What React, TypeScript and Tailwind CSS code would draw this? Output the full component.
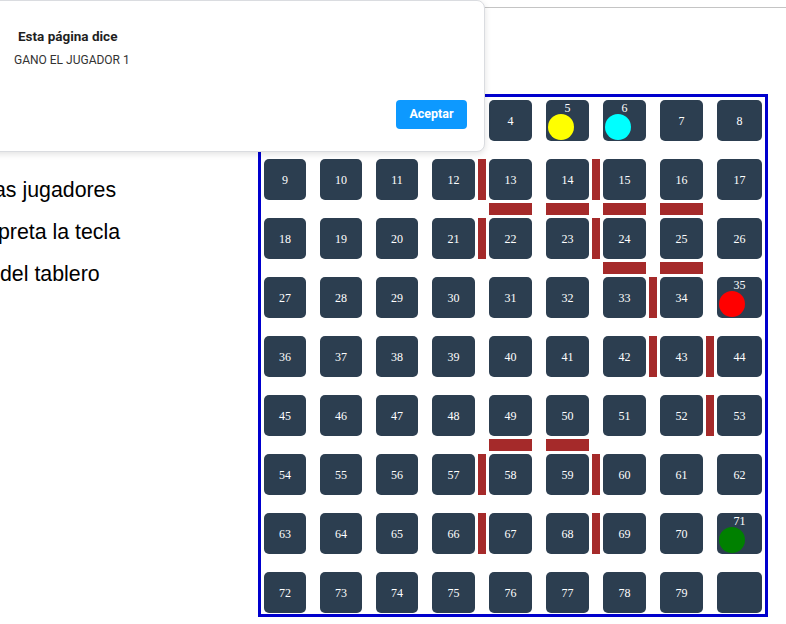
import React from 'react';

const verticalWalls = new Set([12, 14, 21, 23, 33, 42, 43, 52, 57, 59, 66, 68]);
const horizontalWalls = new Set([13, 14, 15, 16, 24, 25, 49, 50]);
const tokens: Record<number, string> = {
  5: 'bg-[#ffff00]',
  6: 'bg-[#00ffff]',
  35: 'bg-[#ff0000]',
  71: 'bg-[#008000]',
};

function Cell({ n }: { n: number }) {
  const token = tokens[n];
  const label = n === 80 ? '' : String(n);
  return (
    <div className="rounded-[5px] bg-[#2c3e50] text-white flex flex-col items-center justify-center font-['Liberation_Serif',serif] text-[12px]">
      {token ? (
        <>
          <span className="leading-[12px]">{label}</span>
          <div className={`w-[26px] h-[26px] rounded-full self-start ml-[2px] ${token}`} />
        </>
      ) : (
        <span className="leading-[14px]">{label}</span>
      )}
    </div>
  );
}

function Board() {
  const items: React.ReactNode[] = [];
  for (let r = 0; r < 17; r++) {
    for (let c = 0; c < 17; c++) {
      const key = `${r}-${c}`;
      if (r % 2 === 0 && c % 2 === 0) {
        items.push(<Cell key={key} n={(r / 2) * 9 + c / 2} />);
      } else if (r % 2 === 0) {
        const left = (r / 2) * 9 + (c - 1) / 2;
        items.push(
          verticalWalls.has(left) ? (
            <div key={key} className="mx-auto w-[8px] h-full bg-[#a52a2a]" />
          ) : (
            <div key={key} />
          )
        );
      } else if (c % 2 === 0) {
        const above = ((r - 1) / 2) * 9 + c / 2;
        items.push(
          horizontalWalls.has(above) ? (
            <div key={key} className="my-auto w-full h-[12px] bg-[#a52a2a]" />
          ) : (
            <div key={key} />
          )
        );
      } else {
        items.push(<div key={key} />);
      }
    }
  }
  return (
    <div className="shrink-0 w-[510px] h-[523px] border-[3px] border-[#0000cd] pt-[3px] pl-[3px]">
      <div className="grid grid-cols-[42px_14px_42px_14px_42px_14px_43px_14px_43px_14px_43px_14px_43px_14px_43px_14px_45px] grid-rows-[41px_18px_41px_18px_41px_18px_41px_18px_41px_18px_41px_18px_41px_18px_41px_18px_41px]">
        {items}
      </div>
    </div>
  );
}

function AlertDialog() {
  return (
    <div className="absolute top-0 left-[-16px] w-[501px] h-[152px] rounded-lg border border-[#dadce0] bg-white shadow-[0_2px_6px_rgba(0,0,0,0.12)] pt-[25px] pl-[29px] pr-[17px] font-['Roboto',sans-serif]">
      <p className="ml-[4px] text-[13.5px] leading-[20px] font-bold text-[#1f1f1f]">Esta página dice</p>
      <p className="mt-[6px] text-[12px] leading-[16px] text-[#333333]">GANO EL JUGADOR 1</p>
      <div className="mt-[32px] flex justify-end">
        <button className="w-[71px] h-[29px] rounded-[4px] bg-[#0d99ff] text-white text-[12.5px] font-bold">
          Aceptar
        </button>
      </div>
    </div>
  );
}

export default function App() {
  return (
    <div className="relative w-[786px] h-[624px] overflow-hidden bg-white">
      <hr className="mt-[7px] border-t border-[#c4c4c4]" />
      <div className="mt-[86px] flex items-start">
        <div className="w-[258px] shrink-0 pt-[84px] flex flex-col gap-[18px] font-['Liberation_Sans',sans-serif] text-[21.33px] leading-[24px] text-black whitespace-nowrap">
          <p className="-ml-[6px]">as jugadores</p>
          <p className="-ml-[2px]">preta la tecla</p>
          <p>del tablero</p>
        </div>
        <Board />
      </div>
      <AlertDialog />
    </div>
  );
}
